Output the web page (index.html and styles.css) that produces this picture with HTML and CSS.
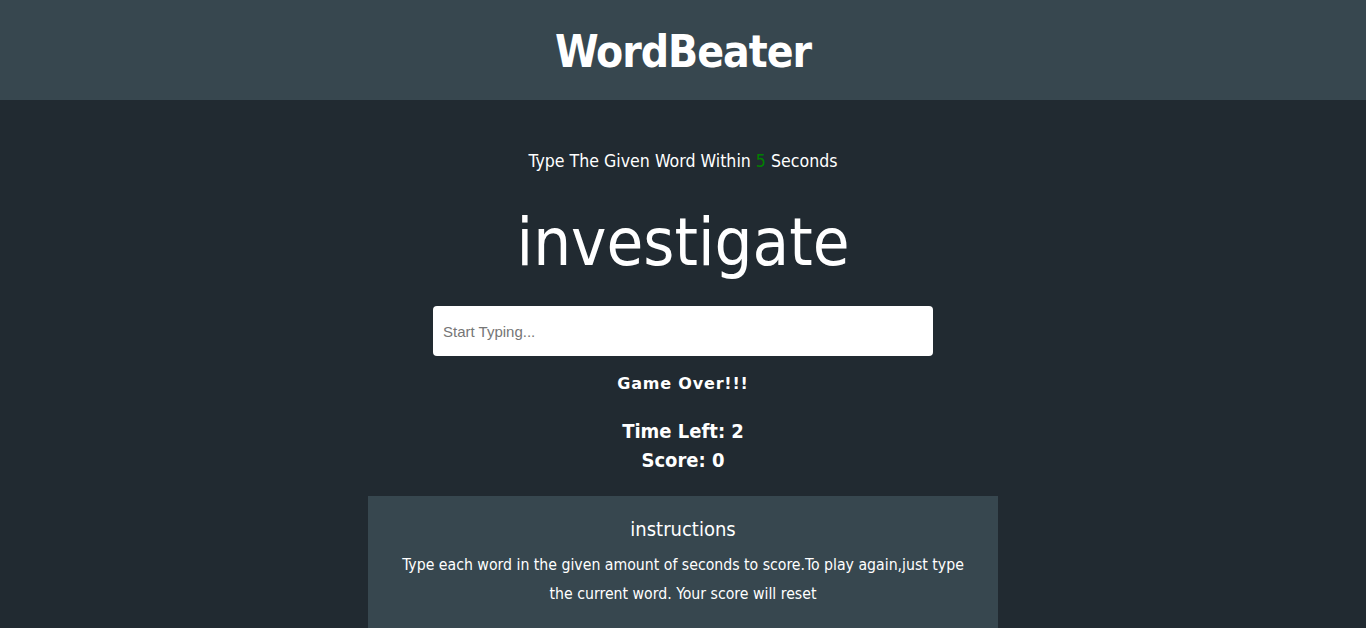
FILE: index.html
```html
<!DOCTYPE html>
<html lang="en">
<head>
<meta charset="utf-8">
<title>WordBeater</title>
<link rel="stylesheet" href="styles.css">
</head>
<body>
<header class="topbar">
  <h1 class="brand">WordBeater</h1>
</header>
<main class="game">
  <p class="lead">Type The Given Word Within <span class="secs">5</span> Seconds</p>
  <h2 class="word">investigate</h2>
  <input class="entry" type="text" placeholder="Start Typing...">
  <h4 class="message">Game Over!!!</h4>
  <div class="stats">
    <h3 class="stat">Time Left: <span>2</span></h3>
    <h3 class="stat">Score: <span>0</span></h3>
  </div>
  <section class="help">
    <h5 class="help-title">instructions</h5>
    <p class="help-text">Type each word in the given amount of seconds to score.To play again,just type the current word. Your score will reset</p>
  </section>
</main>
</body>
</html>
```
FILE: styles.css
```css
* { box-sizing: border-box; }
html, body { margin: 0; padding: 0; }
body {
  background: #212a31;
  color: #ffffff;
  font-family: "DejaVu Sans Condensed", "DejaVu Sans", sans-serif;
  height: 628px;
  overflow: hidden;
}
.topbar {
  background: #37474f;
  height: 100px;
  display: flex;
  align-items: center;
  justify-content: center;
}
.brand {
  margin: 4px 0 0;
  font-size: 44px;
  font-weight: bold;
  letter-spacing: -1px;
  line-height: 1;
}
.game {
  display: flex;
  flex-direction: column;
  align-items: center;
}
.lead {
  margin: 50px 0 0;
  font-size: 17.6px;
  line-height: 22px;
}
.secs { color: #008000; }
.word {
  margin: 28px 0 0;
  font-size: 66.5px;
  font-weight: normal;
  line-height: 84px;
}
.entry {
  margin-top: 22px;
  width: 500px;
  height: 50px;
  border: none;
  border-radius: 4px;
  padding: 0 10px;
  font-family: "Liberation Sans", Arial, sans-serif;
  font-size: 15px;
  color: #333;
  background: #fff;
  outline: none;
}
.entry::placeholder { color: #767676; }
.message {
  margin: 17px 0 0;
  font-family: "DejaVu Sans", sans-serif;
  font-size: 16px;
  line-height: 22px;
  font-weight: bold;
  letter-spacing: 0.8px;
}
.stats {
  margin-top: 22px;
  display: flex;
  flex-direction: column;
  align-items: center;
}
.stat {
  margin: 0;
  font-size: 20px;
  line-height: 29px;
  font-weight: bold;
}
.help {
  margin-top: 21px;
  width: 630px;
  background: #37474f;
  padding: 20px 28px 30px;
  text-align: center;
}
.help-title {
  margin: 0;
  font-size: 20px;
  font-weight: normal;
  line-height: 26px;
}
.help-text {
  margin: 8px 0 0;
  font-size: 15.7px;
  line-height: 29px;
}
```
